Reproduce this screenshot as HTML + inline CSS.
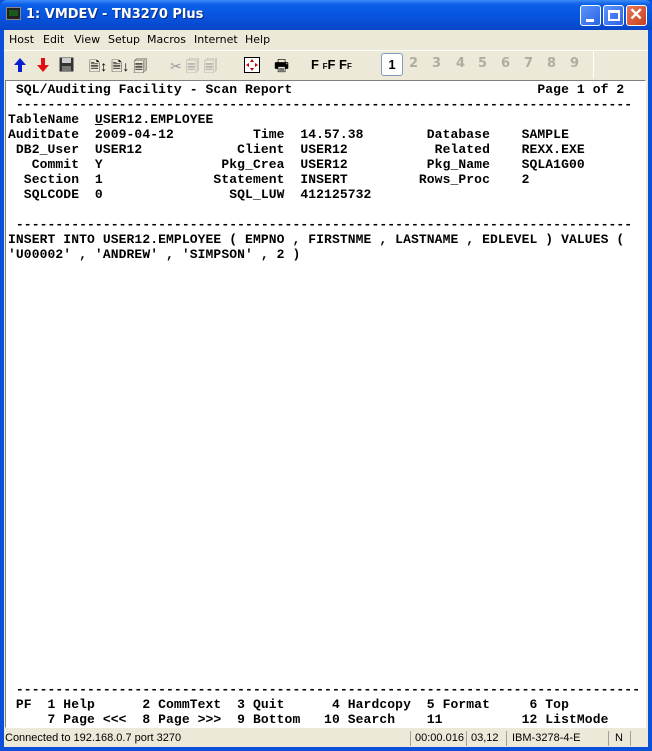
<!DOCTYPE html>
<html><head><meta charset="utf-8"><style>
*{margin:0;padding:0;box-sizing:border-box}
body{width:652px;height:751px;overflow:hidden;background:#0a50d8;font-family:Tahoma,"DejaVu Sans",sans-serif;position:relative}
#title{position:absolute;left:0;top:0;width:652px;height:30px;background:linear-gradient(#3d8cf5,#0a5ee8 15%,#0852dc 60%,#0846c8);border-radius:7px 7px 0 0}
#title .t{position:absolute;left:26px;top:7px;color:#fff;font:bold 13px "DejaVu Sans",sans-serif;text-shadow:1px 1px #0a2a80}
.btn{position:absolute;top:5px;width:21px;height:21px;border:1px solid #fff;border-radius:3px;background:linear-gradient(135deg,#5c94f8,#2a64e8)}
.btn.x{background:linear-gradient(135deg,#e8785a,#c8401c)}
#frame{position:absolute;left:4px;top:30px;width:644px;height:717px;background:#ece9d8}
#menu{position:absolute;left:4px;top:30px;height:19px;font-size:11px;color:#000}
#menu span{position:absolute;top:3px;white-space:nowrap}
#tb{position:absolute;left:4px;top:50px;width:644px;height:30px;border-top:1px solid #fff}
#term{position:absolute;left:5px;top:80px;width:641px;height:648px;background:#fff;border:1px solid #808080;border-right-color:#fff;border-bottom-color:#fff;overflow:hidden}
pre{position:absolute;left:2px;top:1px;font:bold 13px "Liberation Mono",monospace;letter-spacing:0.1px;line-height:15px;color:#000}
#status{position:absolute;left:4px;top:730px;width:644px;height:17px;font:11px "Liberation Sans Narrow","Liberation Sans",sans-serif;color:#000}
#status span{position:absolute;top:2px;white-space:nowrap}
.sep{position:absolute;top:1px;width:1px;height:15px;background:#a0a0a0}
.num{position:absolute;top:56px;font:bold 13px "DejaVu Sans",sans-serif;color:#b0aca0}
</style></head><body>
<div id="title">
<div style="position:absolute;left:6px;top:7px;width:15px;height:13px;background:#222;border:1px solid #888"><div style="margin:2px;height:6px;background:#1a5a1a"></div></div>
<div class="t">1: VMDEV - TN3270 Plus</div>
<div class="btn" style="left:580px"><div style="position:absolute;left:5px;top:13px;width:8px;height:3px;background:#fff"></div></div>
<div class="btn" style="left:603px"><div style="position:absolute;left:4px;top:4px;width:12px;height:11px;border:2px solid #fff;border-top-width:3px"></div></div>
<div class="btn x" style="left:626px"><div style="position:absolute;left:2px;top:-1px;color:#fff;font:bold 17px sans-serif">✕</div></div>
</div>
<div id="frame"></div>
<div id="menu"><span style="left:5px">Host</span><span style="left:39px">Edit</span><span style="left:70px">View</span><span style="left:104px">Setup</span><span style="left:143px">Macros</span><span style="left:190px">Internet</span><span style="left:241px">Help</span></div>
<div id="tb"></div>
<svg style="position:absolute;left:13px;top:57px" width="14" height="16"><path d="M7 1L1 8h4v7h4V8h4z" fill="#0a20d0"/></svg>
<svg style="position:absolute;left:36px;top:57px" width="14" height="16"><path d="M7 15L1 8h4V1h4v7h4z" fill="#e01010"/></svg>
<svg style="position:absolute;left:59px;top:57px" width="15" height="15"><rect x="0.5" y="0.5" width="14" height="14" fill="#333"/><rect x="3" y="1" width="9" height="5" fill="#ccc"/><rect x="3" y="9" width="9" height="5" fill="#777"/></svg>
<div style="position:absolute;left:89px;top:56px;font:14px sans-serif">🗎↕ 🗎↓ 🗐</div>
<div style="position:absolute;left:170px;top:56px;font:14px sans-serif;color:#999">✂ 🗐 🗐</div>
<svg style="position:absolute;left:244px;top:57px" width="16" height="16"><rect x="0.5" y="0.5" width="15" height="15" fill="#fff" stroke="#000"/><path d="M8 2l2 3H6zM8 14l2-3H6zM2 8l3-2v4zM14 8l-3-2v4z" fill="#c00"/></svg>
<div style="position:absolute;left:274px;top:55px;font:16px sans-serif">🖶</div>
<div style="position:absolute;left:311px;top:57px;font:bold 13px sans-serif">F <span style="font-size:8px">F</span>F F<span style="font-size:8px">F</span></div>
<div style="position:absolute;left:381px;top:53px;width:22px;height:23px;border:1px solid #7f9db9;border-radius:3px;background:#fff;font:bold 13px sans-serif;text-align:center;line-height:21px">1</div>
<div class="num" style="left:409px">2</div><div class="num" style="left:432px">3</div><div class="num" style="left:456px">4</div><div class="num" style="left:478px">5</div><div class="num" style="left:501px">6</div><div class="num" style="left:524px">7</div><div class="num" style="left:547px">8</div><div class="num" style="left:570px">9</div>
<div style="position:absolute;left:593px;top:51px;width:1px;height:27px;background:#aca899;border-right:1px solid #fff"></div>
<div id="term"><pre> SQL/Auditing Facility - Scan Report                               Page 1 of 2
 ------------------------------------------------------------------------------
TableName  <u>U</u>SER12.EMPLOYEE
AuditDate  2009-04-12          Time  14.57.38        Database    SAMPLE
 DB2_User  USER12            Client  USER12           Related    REXX.EXE
   Commit  Y               Pkg_Crea  USER12          Pkg_Name    SQLA1G00
  Section  1              Statement  INSERT         Rows_Proc    2
  SQLCODE  0                SQL_LUW  412125732

 ------------------------------------------------------------------------------
INSERT INTO USER12.EMPLOYEE ( EMPNO , FIRSTNME , LASTNAME , EDLEVEL ) VALUES (
'U00002' , 'ANDREW' , 'SIMPSON' , 2 )




























 -------------------------------------------------------------------------------
 PF  1 Help      2 CommText  3 Quit      4 Hardcopy  5 Format     6 Top
     7 Page &lt;&lt;&lt;  8 Page &gt;&gt;&gt;  9 Bottom   10 Search    11          12 ListMode</pre></div>
<div id="status"><span style="left:1px">Connected to 192.168.0.7 port 3270</span>
<div class="sep" style="left:406px"></div><span style="left:411px">00:00.016</span>
<div class="sep" style="left:462px"></div><span style="left:467px">03,12</span>
<div class="sep" style="left:502px"></div><span style="left:508px">IBM-3278-4-E</span>
<div class="sep" style="left:604px"></div><span style="left:611px">N</span>
<div class="sep" style="left:626px"></div></div>
</body></html>
